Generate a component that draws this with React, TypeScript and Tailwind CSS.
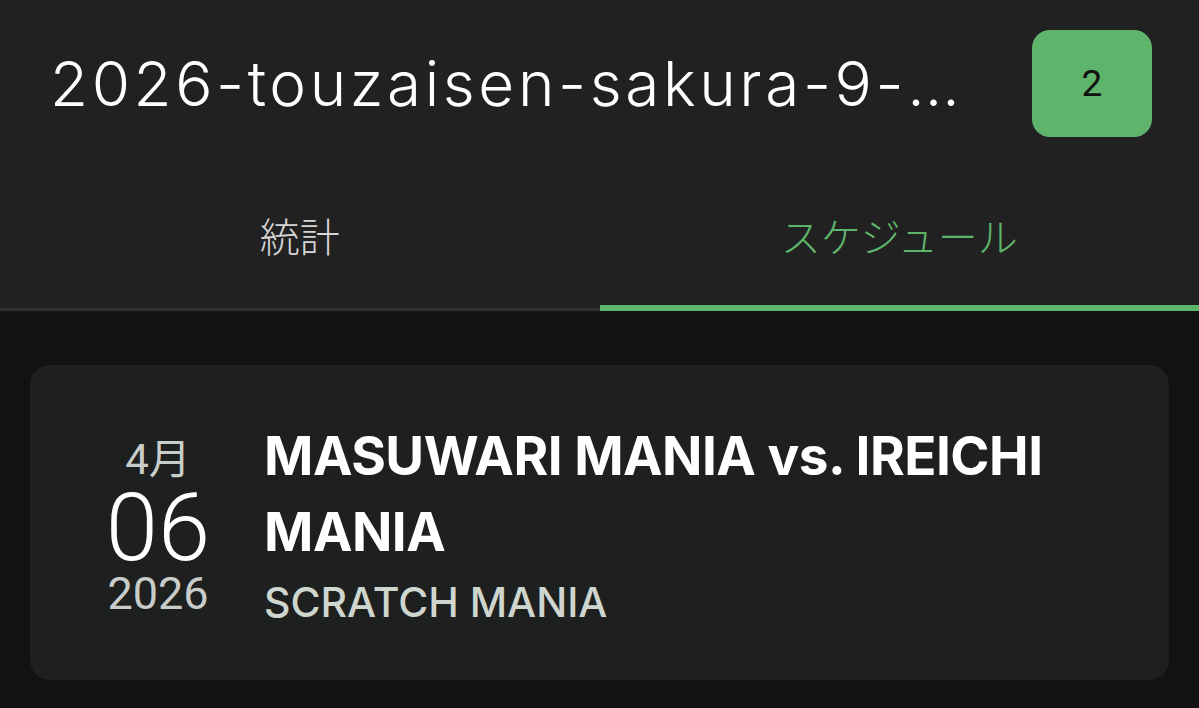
import React from 'react';

const tabs = [
  { label: '統計', active: false },
  { label: 'スケジュール', active: true },
];

export default function App() {
  return (
    <div className="min-h-screen w-full bg-[#121212] font-['Inter','Noto_Sans_CJK_JP',sans-serif]">
      {/* Header */}
      <div className="bg-[#212121]">
        <div className="flex items-center pl-[50px] pr-[47px] pt-[30px]">
          <h1 className="min-w-0 flex-1 truncate text-[62px] font-light leading-[107px] tracking-[3.6px] text-white">
            2026-touzaisen-sakura-9-manie
          </h1>
          <div className="ml-[62px] flex h-[107px] w-[120px] shrink-0 items-center justify-center rounded-[18px] bg-[#5fb46b] font-['Roboto',sans-serif] text-[37px] text-[#111]">
            2
          </div>
        </div>

        {/* Tabs */}
        <div className="relative grid grid-cols-2 border-b-[3px] border-[#2f3430]">
          {tabs.map((t) => (
            <div
              key={t.label}
              className={`relative flex h-[171px] items-center justify-center pt-[24px] font-['Noto_Sans_CJK_JP',sans-serif] text-[40px] font-light ${
                t.active ? 'text-[#5fb46b]' : 'text-[#d6d6d6]'
              }`}
            >
              {t.label}
              {t.active && (
                <div className="absolute -bottom-[3px] left-0 right-0 h-[6px] bg-[#5fb46b]" />
              )}
            </div>
          ))}
        </div>
      </div>

      {/* Schedule list */}
      <div className="px-[30px] pt-[54px]">
        <div className="flex items-start rounded-[20px] bg-[#1e201f] py-[53px]">
          <div className="flex w-[234px] shrink-0 flex-col items-center pl-[22px] pt-[20px] font-['Roboto','Noto_Sans_CJK_JP',sans-serif]">
            <span className="text-[42px] leading-[44px] text-[#c9cdc9]">4月</span>
            <span className="text-[94px] font-light leading-[92px] text-white">06</span>
            <span className="text-[45px] leading-[40px] text-[#c9cdc9]">2026</span>
          </div>
          <div className="min-w-0 flex-1 pr-[90px]">
            <div className="text-[53px] font-bold leading-[76px] tracking-[-0.5px] text-white">
              MASUWARI MANIA vs. IREICHI MANIA
            </div>
            <div className="mt-[7px] text-[41px] font-medium leading-[50px] text-[#cfd6cf]">
              SCRATCH MANIA
            </div>
          </div>
        </div>
      </div>
    </div>
  );
}
